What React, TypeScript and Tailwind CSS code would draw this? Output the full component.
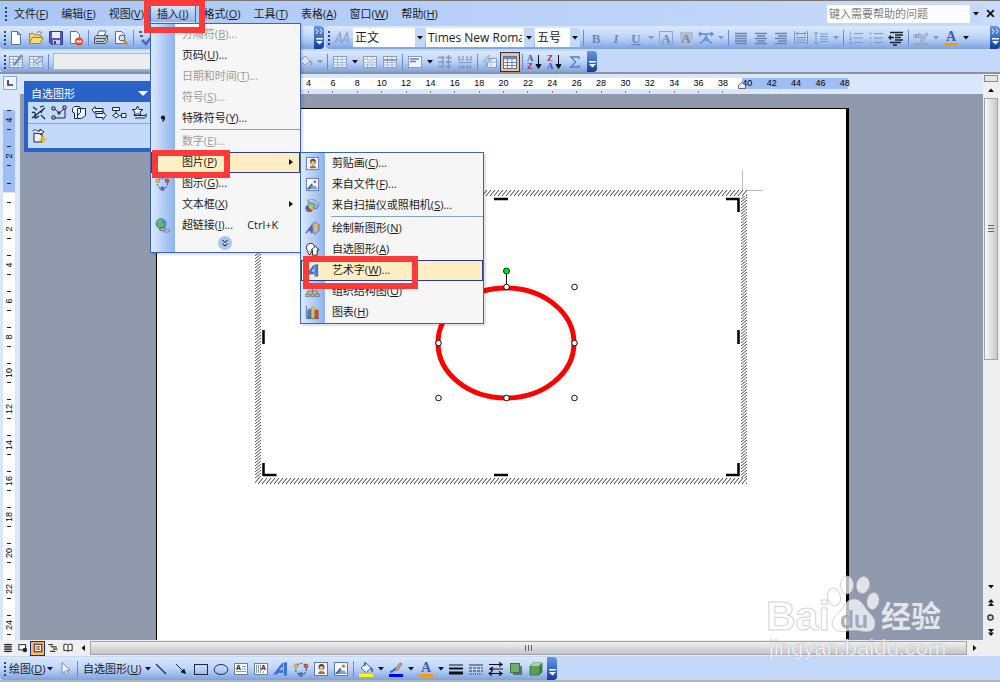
import type { ReactNode } from "react";
import clsx from "clsx";

const FONT = "font-['Open_Sans','Noto_Sans_CJK_SC',sans-serif]";
const BAR = "bg-linear-to-b from-[#dce9fd] via-[#bdd4f8] to-[#7ba3e2]";

const letter = (text: string, color = "#6f86b8", extra = "") => (
  <text x="8" y="13" textAnchor="middle" fontSize="13" fontWeight="bold" fill={color} className={clsx("font-['Liberation_Serif',serif]", extra)}>
    {text}
  </text>
);

const wordArt = (
  <>
    <path d="M0 13.5L9 2l5-1v13.500h-4V12H5.500L4 13.500z" fill="#3f74d6" />
    <path d="M10.500 2v12" stroke="#8db4f2" strokeWidth="1" />
    <path d="M7 9l2.500-3.500V9z" fill="#dce9fd" />
  </>
);

const grid = (
  <>
    <rect x="1.5" y="2.5" width="13" height="11" fill="#eef3fb" stroke="#8b9cbd" />
    <path d="M2 5.5H14M2 8.5H14M2 11H14M5.5 3V13M10 3V13" stroke="#a9b7d0" />
  </>
);

const icons: Record<string, ReactNode> = {
  new: <path d="M3.5 1.5h6l3 3v10h-9zM9.5 1.5v3h3" fill="#fff" stroke="#5d6f96" />,
  open: (
    <>
      <path d="M1.5 13.5v-10h4l1.5 1.5h6v2.5" fill="#f7d272" stroke="#a9812c" />
      <path d="M1.5 13.5l3-6h10.5l-3 6z" fill="#fbdc83" stroke="#a9812c" />
      <path d="M9 3c1-2 4-2 5 1" fill="none" stroke="#4b78c4" />
    </>
  ),
  save: (
    <>
      <path d="M1.5 1.5h13v13h-11l-2-2z" fill="#5557b8" stroke="#353994" />
      <path d="M4 2h8v6H4z" fill="#e8ecf8" />
      <path d="M5 10h7v4.5H5z" fill="#c9cde6" />
      <path d="M6 11h2v3H6z" fill="#353994" />
    </>
  ),
  permission: (
    <>
      <path d="M2.5 1.5h6l3 3v9h-9z" fill="#fff" stroke="#5d6f96" />
      <circle cx="11" cy="11.5" r="4" fill="#df4b2c" />
      <path d="M8.5 11.5h5" stroke="#fff" strokeWidth="2" />
    </>
  ),
  print: (
    <>
      <path d="M4 6l2-5h7l-2 5z" fill="#fff" stroke="#5a6a86" />
      <path d="M1.5 7.5l2-2h11v5l-2 3h-11z" fill="#c2c9d4" stroke="#4c5668" />
      <path d="M2 8.5h10.5l2-3M3 11.5h8" stroke="#4c5668" fill="none" />
      <path d="M11 10h2" stroke="#38a838" strokeWidth="1.5" />
    </>
  ),
  preview: (
    <>
      <path d="M2.5 1.5h6l3 3v9h-9z" fill="#fff" stroke="#5d6f96" />
      <circle cx="9" cy="8" r="3" fill="#cfe3fa" stroke="#4c5668" />
      <path d="M11 10.5l3.5 4" stroke="#c9812b" strokeWidth="2" />
    </>
  ),
  spell: (
    <>
      <path d="M1 2h3M8 2h4M2 6h3" stroke="#334" strokeWidth="1.5" />
      <path d="M4 10l4 4 6-8" stroke="#4a66c4" strokeWidth="2.5" fill="none" />
    </>
  ),
  tablePen: (
    <>
      {grid}
      <path d="M6 11L14 1" stroke="#7c8cad" strokeWidth="2.5" />
    </>
  ),
  tableErase: (
    <>
      {grid}
      <path d="M6 8l4-4 5-2-1 4-5 4z" fill="#c9d2e4" stroke="#8b9cbd" />
    </>
  ),
  bucketGray: (
    <>
      <path d="M3 7l5-5 5 5-5 4z" fill="#dfe6f2" stroke="#8b9cbd" />
      <path d="M13 7c2 1 2 3 1 4" stroke="#8b9cbd" fill="none" strokeWidth="1.5" />
      <path d="M1 13h13v3H1z" fill="#a5adbc" />
    </>
  ),
  grid,
  merge: (
    <>
      {grid}
      <path d="M5 5h7v5H5z" fill="#cfd9ea" />
    </>
  ),
  split: (
    <>
      {grid}
      <path d="M2 6h12" stroke="#8b9cbd" strokeWidth="2" />
    </>
  ),
  alignCell: (
    <>
      <rect x="1.5" y="2.5" width="13" height="11" fill="#eef3fb" stroke="#8b9cbd" />
      <path d="M3 5h9M3 7.5h6" stroke="#6f80a6" strokeWidth="1.5" />
    </>
  ),
  rows: <path d="M1 3.5h5M1 8h5M1 12.5h5M8.5 3.5h6M8.5 8h6M8.5 12.5h6M11.5 1v14M6 2v12" stroke="#8094ba" strokeWidth="1.3" fill="none" />,
  cols: <path d="M2 2v4h4V2M10 2v4h4V2M1 8.5h14M2.5 11v4M6 11v4M10 11v4M13.5 11v4M2 13h12" stroke="#8094ba" strokeWidth="1.2" fill="none" />,
  autoFormat: (
    <>
      <path d="M5.5 4.5h9v9h-9z" fill="#e7edf7" stroke="#8b9cbd" />
      <path d="M5 8h9M9 5v9" stroke="#a9b7d0" />
      <path d="M7 1L1 8h4l-3 5 7-7H6z" fill="#bcc9df" stroke="#8b9cbd" strokeWidth="0.7" />
    </>
  ),
  gridOn: (
    <>
      <rect x="1.5" y="2.5" width="13" height="12" fill="#fff" stroke="#5471ab" />
      <path d="M2 4h12" stroke="#5c88d8" strokeWidth="2.5" />
      <path d="M2 8.5h12M2 11.5h12M5.5 5v9M10 5v9" stroke="#6d86b8" />
    </>
  ),
  sortAZ: (
    <>
      <text x="0" y="7" fontSize="9" fontWeight="bold" fill="#3557a8" className="font-['Liberation_Serif',serif]">A</text>
      <text x="0" y="15" fontSize="9" fontWeight="bold" fill="#a33" className="font-['Liberation_Serif',serif]">Z</text>
      <path d="M11.5 1v12M9 10.5l2.5 4 2.5-4z" stroke="#111" fill="#111" />
    </>
  ),
  sortZA: (
    <>
      <text x="0" y="7" fontSize="9" fontWeight="bold" fill="#a33" className="font-['Liberation_Serif',serif]">Z</text>
      <text x="0" y="15" fontSize="9" fontWeight="bold" fill="#3557a8" className="font-['Liberation_Serif',serif]">A</text>
      <path d="M11.5 1v12M9 10.5l2.5 4 2.5-4z" stroke="#111" fill="#111" />
    </>
  ),
  sum: <path d="M12 5V3H4l4.5 5L4 13h8v-2" fill="none" stroke="#5f7db8" strokeWidth="1.4" />,
  styles: (
    <path d="M1 13L6 3l1.5 10M2.5 10H7M8 13l5-10 1.5 10M9.5 10H14" fill="none" stroke="#93a6cb" strokeWidth="1.5" />
  ),
  bold: letter("B"),
  italic: letter("I", "#6f86b8", "italic"),
  underline: letter("U", "#6f86b8", "underline"),
  charBox: (
    <>
      <rect x="1.5" y="1.5" width="13" height="13" fill="none" stroke="#8ba3d0" />
      {letter("A", "#6f87b8")}
    </>
  ),
  charShade: (
    <>
      <rect x="2" y="2" width="13" height="13" fill="#b3bccf" />
      {letter("A", "#6f87b8")}
    </>
  ),
  charScale: <path d="M1 4h14M3 2L1 4l2 2M13 2l2 2-2 2M2 13c4-1 5-4 6-7 1 3 2 6 6 7M5 10h6" stroke="#5f8bd6" strokeWidth="1.4" fill="none" />,
  justify: <path d="M2 3.5h12M2 6h12M2 8.5h12M2 11h12M2 13.5h12" stroke="#6f84b0" strokeWidth="1.4" />,
  center: <path d="M2 3.5h12M4 6h8M2 8.5h12M4 11h8M2 13.5h12" stroke="#6f84b0" strokeWidth="1.4" />,
  right: <path d="M2 3.5h12M5 6h9M2 8.5h12M5 11h9M2 13.5h12" stroke="#6f84b0" strokeWidth="1.4" />,
  distribute: <path d="M1.5 1v14M14.5 1v14M3 3.5h10M5 2L3 3.5 5 5M11 2l2 1.5L11 5M3 7.5h10M3 10h10M3 12.5h10" stroke="#7e92bb" fill="none" />,
  spacing: <path d="M3 2v12M1 4l2-2 2 2M1 12l2 2 2-2M7 4h8M7 6.5h8M7 9h8M7 11.5h8" stroke="#8094c0" fill="none" />,
  numList: (
    <>
      <path d="M6 3.5h9M6 8h9M6 12.5h9" stroke="#8094c0" />
      <path d="M2.5 1.5v4M1.5 7h2v1l-2 1.5h2M1.5 11.5h2v3h-2M3.5 13h-2" stroke="#8094c0" fill="none" strokeWidth="0.8" />
    </>
  ),
  bulList: (
    <>
      <path d="M6 3.5h9M6 8h9M6 12.5h9" stroke="#8094c0" />
      <path d="M1.5 2.5h2v2h-2zM1.5 7h2v2h-2zM1.5 11.5h2v2h-2z" fill="#98a9cf" />
    </>
  ),
  outdent: <path d="M2 2.5h13M7 5h8M7 7.5h6M7 10h8M2 12.5h11M5 15h4M1 7.5h5M3 5.5L1 7.5l2 2" stroke="#1c2433" strokeWidth="1.3" fill="none" />,
  highlight: (
    <>
      <text x="0" y="8" fontSize="8" fill="#66789c">ab</text>
      <path d="M7 11L13 3l2 1-6 8z" fill="#b6c3dc" stroke="#8798ba" strokeWidth="0.8" />
      <path d="M1 13h14v3H1z" fill="#a2a6a8" />
    </>
  ),
  fontColor: (
    <>
      <text x="8" y="11" textAnchor="middle" fontSize="14" fontWeight="bold" fill="#3a5fae" className="font-['Liberation_Serif',serif]">A</text>
      <path d="M1 13h14v3H1z" fill="#ff9900" />
    </>
  ),
  cursor: <path d="M5 1.5v11l2.5-2.5 2 4.5 2-1-2-4.3h3.5z" fill="#f4f7fc" stroke="#7d8aa6" />,
  line: <path d="M3 3l10 10" stroke="#222b3a" strokeWidth="1.2" />,
  arrow: <path d="M3 3l7 7M12.5 12.5L8 11l3-3z" stroke="#222b3a" fill="#111" />,
  rect: <rect x="1.5" y="3.5" width="13" height="10" fill="none" stroke="#222b3a" />,
  ellipse: <ellipse cx="8" cy="8.5" rx="6.8" ry="5" fill="none" stroke="#222b3a" />,
  textBox: (
    <>
      <rect x="1.5" y="2.5" width="13" height="11" fill="#fff" stroke="#6d7f9f" />
      <text x="3" y="9" fontSize="7" fontWeight="bold" fill="#222">A</text>
      <path d="M9 5.5h4M9 8h4M3 10.5h10" stroke="#8897b3" />
    </>
  ),
  vTextBox: (
    <>
      <rect x="1.5" y="2.5" width="13" height="11" fill="#fff" stroke="#6d7f9f" />
      <text x="8" y="9" fontSize="7" fontWeight="bold" fill="#222">A</text>
      <path d="M3.5 4v8M5.5 4v8M7.5 4v8M10.5 10v2" stroke="#8897b3" />
    </>
  ),
  wordArt,
  diagram: (
    <>
      <circle cx="8" cy="8" r="5.5" fill="none" stroke="#52648c" strokeWidth="1.3" strokeDasharray="2 1.5" />
      <circle cx="3" cy="5" r="2" fill="#f0c23d" stroke="#7a6a3a" strokeWidth="0.5" />
      <circle cx="13" cy="5" r="2" fill="#d9573b" stroke="#7a3a2a" strokeWidth="0.5" />
      <circle cx="8" cy="13.5" r="2" fill="#5a6fd0" stroke="#334488" strokeWidth="0.5" />
    </>
  ),
  clipArt: (
    <>
      <rect x="1.5" y="1.5" width="13" height="13" fill="#f2f6fc" stroke="#5d79aa" />
      <circle cx="8.5" cy="6" r="3" fill="#5b4032" />
      <circle cx="8.5" cy="7" r="2" fill="#eec08c" />
      <path d="M5 13c0-4 7-4 7 0z" fill="#b46a35" />
    </>
  ),
  picture: (
    <>
      <rect x="1.5" y="1.5" width="13" height="13" fill="#f6f9fe" stroke="#5d79aa" />
      <path d="M2 13l5-6 3 3 1-1 3 4z" fill="#7f9fd0" />
      <path d="M2 13l5-6 1 1-3 5z" fill="#46659c" />
      <circle cx="10.5" cy="5" r="1.6" fill="#e0663a" />
    </>
  ),
  scanner: (
    <>
      <path d="M3 2h7l5 4-2 5-5 1 2-5-6-1z" fill="#8fb0cf" stroke="#50708f" strokeWidth="0.8" />
      <path d="M4 2l7 2 3 2" stroke="#dcebf7" fill="none" />
      <circle cx="4.5" cy="11" r="4" fill="#42b04a" />
      <path d="M4.5 11V7a4 4 0 0 1 3.5 6z" fill="#e6c52e" />
      <path d="M4.5 11l3.5 2a4 4 0 0 1-6 1z" fill="#d83d4c" />
      <path d="M4.5 11l-2.5 3a4 4 0 0 1 0-6z" fill="#4f5fd0" />
    </>
  ),
  newDrawing: (
    <>
      <path d="M7 4l4-3 4 3v6l-4 4-3-2z" fill="#9aa9c9" stroke="#5d6c93" strokeWidth="0.8" />
      <path d="M10 4l3-2v8l-3 2z" fill="#e5c15a" />
      <path d="M0 13L6 5l2-.5V13H6v-2H3l-1 2z" fill="#5d5cc4" />
    </>
  ),
  autoShape: (
    <>
      <circle cx="6" cy="6" r="4.5" fill="#fff" stroke="#222" />
      <path d="M11 4.5l4 4h-2V14H8V8.5H6.5z" fill="#fff" stroke="#222" />
      <path d="M2 10l3 4 2-4" stroke="#222" fill="#fff" />
    </>
  ),
  orgChart: <path d="M6.5 2h3v3h-3zM1 10.5h3.5v3H1zM6.3 10.5h3.5v3H6.3zM11.5 10.5H15v3h-3.5zM8 5v5M3 10V7.5h10V10" fill="#d8c078" stroke="#5e6f91" strokeWidth="0.9" />,
  chart: (
    <>
      <path d="M1.5 1v13.5H15" stroke="#5e6f91" fill="none" />
      <path d="M3 6l1.5-2L6 5v9H3z" fill="#4a7bd8" stroke="#2c4f96" strokeWidth="0.6" />
      <path d="M7 3l1.5-1.5L10 3v11H7z" fill="#f0c23d" stroke="#a07a1c" strokeWidth="0.6" />
      <path d="M11 6l1.5-1.5L14 6v8h-3z" fill="#e04a2a" stroke="#8d2c17" strokeWidth="0.6" />
    </>
  ),
  comma: (
    <>
      <circle cx="8.5" cy="7" r="2.2" fill="#111" />
      <path d="M10.2 7.5c0 2-1 3-2.3 3.8" stroke="#111" strokeWidth="1.2" fill="none" />
    </>
  ),
  hyperlink: (
    <>
      <circle cx="6.5" cy="6" r="5.5" fill="#4a8fd8" stroke="#50708f" strokeWidth="0.6" />
      <path d="M2 4c2-3 5-3 6-2l-1 3 3 2-2 3-4 1-1-4z" fill="#5cbf58" />
      <rect x="5" y="10" width="6" height="3.5" rx="1.7" fill="none" stroke="#6b7786" strokeWidth="1.4" />
      <rect x="9.5" y="11.5" width="6" height="3.5" rx="1.7" fill="none" stroke="#8a95a3" strokeWidth="1.4" />
    </>
  ),
  fill: (
    <>
      <path d="M3 7l5-5 5 5-5 4.5z" fill="#e9eff8" stroke="#4c68a0" />
      <path d="M7 5V1M12.5 7c2 1 2 3 1.5 4" stroke="#3c62b0" fill="none" strokeWidth="1.5" />
      <path d="M1 13h14v3H1z" fill="#ffff00" />
    </>
  ),
  lineColor: (
    <>
      <path d="M2 11c3 0 4-2 6-4" stroke="#3c62b0" strokeWidth="2" fill="none" />
      <path d="M7 8l5-6 2 1-5 7z" fill="#e6a64a" stroke="#4c68a0" strokeWidth="0.8" />
      <path d="M1 13h14v3H1z" fill="#0000ff" />
    </>
  ),
  lineWeight: (
    <>
      <path d="M1 4h14" stroke="#111" />
      <path d="M1 7.5h14" stroke="#111" strokeWidth="2" />
      <path d="M1 12h14" stroke="#111" strokeWidth="3" />
    </>
  ),
  dash: (
    <>
      <path d="M1 4h14" stroke="#333" />
      <path d="M1 7h14M1 10h14" stroke="#333" strokeDasharray="3 1" />
      <path d="M1 13h14" stroke="#333" strokeDasharray="1 1" />
    </>
  ),
  arrows: <path d="M1 3.5h13M11 1.5l3 2-3 2M2 8h13M5 6L2 8l3 2M1 12.5h13M4 10.5l-3 2 3 2M11 10.5l3 2-3 2" stroke="#111" fill="none" strokeWidth="1.2" />,
  shadow: (
    <>
      <rect x="5" y="5" width="9" height="9" fill="#5d7368" />
      <rect x="2.5" y="2.5" width="9" height="9" fill="#6fae6c" stroke="#3c7a3d" />
    </>
  ),
  cube: (
    <>
      <path d="M2 5l3-3h9v9l-3 3H2z" fill="#5b9e58" stroke="#2f6a33" strokeWidth="0.8" />
      <path d="M2 5l3-3h9l-3 3z" fill="#a7d4a2" />
      <path d="M11 5l3-3v9l-3 3z" fill="#3c7f40" />
    </>
  ),
  shLines: <path d="M1 13l13-10M2 2l4 3M9 2l4-1M12 4l-2 4M1 8c2-2 4 0 3 2s2 3 4 1M10 10l4 4M3 13h3" stroke="#1d2740" strokeWidth="1.2" fill="none" />,
  shConn: <path d="M1 2h3v3H1zM12 1h3v3h-3zM7 7h2v2H7zM1 11h3v3H1zM4 4l4 4 5-4M14 4v9H4" stroke="#1d2740" fill="none" />,
  shBasic: <path d="M1.5 3.5l2-2h5l1 2v4l-3 3v3h-3V8l-2-1zM6.5 6.5V3.5H14.5v7l-4 3h-4z" stroke="#1d2740" fill="#eef4fd" />,
  shArrow: <path d="M1 5l3-3.5V3.5h8v3H4V8.5zM15 10.5l-3-4v2H5v4h7v2z" stroke="#1d2740" fill="#eef4fd" />,
  shFlow: <path d="M1.5 2.5h7v3h-7zM5 5.5v3M1.5 10.5L5 8l3 2.5L5 13zM8.5 10.5h2M10.5 8.5h4.5v4h-4.5z" stroke="#1d2740" fill="#eef4fd" />,
  shStar: <path d="M6.5 1l1.5 3.5h4L9 7l1 3.5L6.5 8.5 3 10.5 4 7 1 4.5h4zM3 10.5h12M4 13h10M15 8.5v4" stroke="#1d2740" fill="#eef4fd" />,
  shMore: (
    <>
      <path d="M2 3.5C2 1.5 5 1 6 3h3V1l4 3-4 3M3 5v9h8V6z" stroke="#1d2740" fill="#eef4fd" />
      <path d="M12 8v7M8.5 11.5h7" stroke="#e8b52b" strokeWidth="2.2" />
    </>
  ),
  vNormal: <path d="M3 3.5h10M3 6.5h10M3 9.5h10M3 12.5h10" stroke="#111" strokeWidth="1.5" />,
  vWeb: (
    <>
      <rect x="2.5" y="3.5" width="9" height="7" fill="#fff" stroke="#222" strokeWidth="1.3" />
      <circle cx="10.5" cy="10.5" r="3" fill="#222" />
    </>
  ),
  vPrint: (
    <>
      <rect x="3" y="3" width="10" height="10" fill="#fbe6c4" stroke="#3b3a55" strokeWidth="1.5" />
      <path d="M5.5 6.5h5M5.5 9.5h5" stroke="#3b3a55" strokeWidth="1.3" />
    </>
  ),
  vOutline: <path d="M2 3.5h6M5 6.5h8M8 9.5h6M4 12.5h7" stroke="#333" strokeWidth="1.5" />,
  vRead: <path d="M2.5 3.5c2-1 4-1 5.5 1 1.5-2 3.5-2 5.5-1v8c-2-1-4-.5-5.5 1-1.5-1.5-3.5-2-5.5-1zM8 4.5v8" fill="#fff" stroke="#222" strokeWidth="1.3" />,
};

function Icon({ name, className = "size-4" }: { name: string; className?: string }) {
  return (
    <svg viewBox="0 0 16 16" className={clsx("shrink-0", className)} aria-hidden="true">
      {icons[name]}
    </svg>
  );
}

function Caret({ dim, className }: { dim?: boolean; className?: string }) {
  return (
    <svg viewBox="0 0 6 4" className={clsx("h-1 w-1.5 shrink-0", className)} aria-hidden="true">
      <path d="M0 0h6L3 3.5z" fill={dim ? "#8b97ad" : "#111"} />
    </svg>
  );
}

// "文件(&F)" marks F as the access key
function Accel({ text }: { text: string }) {
  const [before, rest] = text.split("&");
  if (!rest) return <>{before}</>;
  return (
    <>
      {before}
      <u>{rest[0]}</u>
      {rest.slice(1)}
    </>
  );
}

const Grip = () => (
  <span className="flex w-0.5 shrink-0 flex-col gap-0.5">
    {[0, 1, 2, 3].map((i) => (
      <i key={i} className="h-0.5 w-0.5 bg-[#27418a]" />
    ))}
  </span>
);

const Sep = () => (
  <span className="flex w-[5px] shrink-0 justify-center">
    <i className="h-4 w-px bg-[#6a8ccb]" />
  </span>
);

// "|" is a separator, "v" a drop-down arrow, "-" a disabled drop-down arrow
function Tools({ items, active }: { items: string[]; active?: string }) {
  return (
    <>
      {items.map((name, i) => {
        if (name === "|") return <Sep key={i} />;
        if (name === "v" || name === "-")
          return (
            <button key={i} aria-label="更多" className="flex h-full w-2.5 shrink-0 items-center justify-center">
              <Caret dim={name === "-"} />
            </button>
          );
        return (
          <button
            key={i}
            aria-label={name}
            className={clsx(
              "flex h-5 w-5 shrink-0 items-center justify-center",
              name === active && "border border-[#1c2a80] bg-[#fdbf6b]"
            )}
          >
            <Icon name={name} />
          </button>
        );
      })}
    </>
  );
}

function EndCap({ more }: { more?: boolean }) {
  return (
    <button
      aria-label="工具栏选项"
      className="ml-auto flex h-full w-2.5 shrink-0 flex-col items-center justify-end gap-1 rounded-r bg-linear-to-b from-[#6b97e0] to-[#0b3ea0] pb-1"
    >
      {more && (
        <svg viewBox="0 0 8 5" className="h-[5px] w-2" aria-hidden="true">
          <path d="M1 0l2 2.5L1 5M5 0l2 2.5L5 5" stroke="#fff" fill="none" />
        </svg>
      )}
      <svg viewBox="0 0 7 7" className="size-[7px]" aria-hidden="true">
        <path d="M0 0h7v1.5H0zM0 3h7L3.5 6.5z" fill="#fff" />
      </svg>
    </button>
  );
}

function Combo({ label, value, className }: { label: string; value: string; className: string }) {
  return (
    <label className={clsx("relative mr-px flex h-[19px] shrink-0 overflow-hidden bg-white", className)}>
      <select
        aria-label={label}
        className="w-full appearance-none overflow-hidden bg-transparent pr-3 pl-0.5 text-[12px] leading-4 text-clip outline-none"
      >
        <option>{value}</option>
      </select>
      <span className="pointer-events-none absolute inset-y-0 right-0 flex w-2.5 items-center justify-center bg-[#c3d8f8]">
        <Caret />
      </span>
    </label>
  );
}

interface Item {
  text: string;
  icon?: string;
  disabled?: boolean;
  sub?: boolean;
  hot?: boolean;
  shortcut?: string;
  sepBefore?: boolean;
}

const insertItems: Item[] = [
  { text: "分隔符(&B)...", disabled: true },
  { text: "页码(&U)..." },
  { text: "日期和时间(&T)...", disabled: true },
  { text: "符号(&S)...", disabled: true },
  { text: "特殊符号(&Y)...", icon: "comma" },
  { text: "数字(&E)...", disabled: true, sepBefore: true },
  { text: "图片(&P)", sub: true, hot: true },
  { text: "图示(&G)...", icon: "diagram" },
  { text: "文本框(&X)", sub: true },
  { text: "超链接(&I)...", icon: "hyperlink", shortcut: "Ctrl+K" },
];

const pictureItems: Item[] = [
  { text: "剪贴画(&C)...", icon: "clipArt" },
  { text: "来自文件(&F)...", icon: "picture" },
  { text: "来自扫描仪或照相机(&S)...", icon: "scanner" },
  { text: "绘制新图形(&N)", icon: "newDrawing", sepBefore: true },
  { text: "自选图形(&A)", icon: "autoShape" },
  { text: "艺术字(&W)...", icon: "wordArt", hot: true },
  { text: "组织结构图(&O)", icon: "orgChart" },
  { text: "图表(&H)", icon: "chart" },
];

function MenuRows({ items, children }: { items: Item[]; children?: ReactNode }) {
  return (
    <>
      {items.map((item) => (
        <div key={item.text} className="relative">
          {item.sepBefore && <div className="ml-[30px] h-0.5 border-t border-[#7fa3dc]" />}
          <button
            disabled={item.disabled}
            className={clsx(
              "flex h-[21px] w-full items-center border text-left",
              item.hot ? "border-[#2b3a9c] bg-[#ffeec2]" : "border-transparent",
              item.disabled ? "text-[#9b9b9b]" : "text-[#1b1b1b]"
            )}
          >
            <span className="flex w-[30px] shrink-0 pl-[3px]">{item.icon && <Icon name={item.icon} className="size-[15px]" />}</span>
            <span className="whitespace-nowrap">
              <Accel text={item.text} />
            </span>
            {item.shortcut && <span className="mr-auto ml-3.5">{item.shortcut}</span>}
            {item.sub && (
              <svg viewBox="0 0 4 6" className="mr-1.5 ml-auto h-1.5 w-1" aria-hidden="true">
                <path d="M0 0v6l4-3z" fill="#111" />
              </svg>
            )}
          </button>
          {item.sub && item.hot && children}
        </div>
      ))}
    </>
  );
}

const MENU_BOX =
  "absolute z-20 border border-[#3d63b4] bg-[#f6f6f6] bg-[linear-gradient(to_right,#dceafe,#8db2ec)] bg-[length:24px_100%] bg-no-repeat shadow-[2px_2px_2px_#0002]";

function InsertMenu() {
  return (
    <div className={clsx(MENU_BOX, "top-full left-0 w-[151px]")}>
      <MenuRows items={insertItems}>
        <div className={clsx(MENU_BOX, "top-0 left-full w-[184px]")}>
          <MenuRows items={pictureItems} />
        </div>
      </MenuRows>
      <div className="flex h-4 justify-center">
        <button aria-label="展开" className="flex size-[14px] items-center justify-center rounded-full bg-[#a9c6f2]">
          <svg viewBox="0 0 6 8" className="h-2 w-1.5" aria-hidden="true">
            <path d="M.5 1L3 3.5 5.5 1M.5 4.5L3 7l2.5-2.5" stroke="#111" fill="none" />
          </svg>
        </button>
      </div>
    </div>
  );
}

const menus = ["文件(&F)", "编辑(&E)", "视图(&V)", "插入(&I)", "格式(&O)", "工具(&T)", "表格(&A)", "窗口(&W)", "帮助(&H)"];

function MenuBar() {
  return (
    <nav className="flex h-[26px] items-center border-t border-[#7d7470] bg-linear-to-r from-[#a9c7f7] to-[#c8dbfa] pl-[5px]">
      <Grip />
      {menus.map((m) => {
        const open = m.startsWith("插入");
        return (
          <div key={m} className="relative">
            <button
              className={clsx(
                "h-[18px] border pl-1.5 leading-4 whitespace-nowrap",
                open
                  ? "border-[#3d63b4] border-b-transparent bg-linear-to-b from-[#d6e5fc] to-[#8fb3ec] pr-[7px]"
                  : "border-transparent pr-[5px]"
              )}
            >
              <Accel text={m} />
            </button>
            {open && <InsertMenu />}
          </div>
        );
      })}
      <div className="mr-1 ml-auto flex h-[18px] w-[155px] bg-white">
        <input aria-label="帮助" placeholder="键入需要帮助的问题" className="w-full pl-0.5 outline-none placeholder:text-[#7d7d7d]" />
        <span className="flex w-3 shrink-0 items-center justify-center bg-[#c3d8f8]">
          <Caret />
        </span>
      </div>
      <button aria-label="关闭" className="mr-[5px] size-[9px]">
        <svg viewBox="0 0 8 8" aria-hidden="true">
          <path d="M1 1l6 6M7 1L1 7" stroke="#111" strokeWidth="1.6" />
        </svg>
      </button>
    </nav>
  );
}

function Toolbars() {
  return (
    <div className="flex flex-col gap-0.5 border-b-2 border-[#8e9199] bg-[#c4d8f9]">
      <div className="flex h-[23px] gap-0.5">
        <div className={clsx("flex w-[324px] shrink-0 items-center rounded pl-1", BAR)}>
          <Grip />
          <Tools items={["new", "open", "save", "permission", "|", "print", "preview", "|", "spell"]} />
          <EndCap more />
        </div>
        <div className={clsx("flex min-w-0 flex-1 items-center rounded-l pl-0.5", BAR)}>
          <Grip />
          <span className="w-0.5" />
          <Tools items={["styles"]} />
          <span className="w-px" />
          <Combo label="样式" value="正文" className="w-[72px]" />
          <Combo label="字体" value="Times New Roman" className="w-[108px]" />
          <Combo label="字号" value="五号" className="w-[45px]" />
          <Tools
            items={["|", "bold", "italic", "underline", "-", "charBox", "charShade", "charScale", "-", "|", "justify", "center", "right", "distribute", "spacing", "-", "|", "numList", "bulList", "outdent", "|", "highlight", "-", "fontColor", "v"]}
          />
          <EndCap more />
        </div>
      </div>
      <div className={clsx("flex h-[21px] w-[597px] items-center rounded pl-1", BAR)}>
        <Grip />
        <Tools items={["tablePen", "tableErase", "|"]} />
        <select aria-label="线型" className="mr-1.5 ml-0.5 h-[17px] w-[236px] appearance-none border border-[#a9b6c9] bg-[#ecedee]">
          <option></option>
        </select>
        <Tools
          items={["bucketGray", "-", "|", "grid", "v", "merge", "split", "|", "alignCell", "v", "rows", "cols", "|", "autoFormat", "gridOn", "|", "sortAZ", "sortZA", "sum"]}
          active="gridOn"
        />
        <EndCap />
      </div>
    </div>
  );
}

const NUM = "font-['Liberation_Sans',sans-serif] text-[9px] leading-none text-black";

function HorizontalRuler() {
  const marks = Array.from({ length: 24 }, (_, i) => (i + 1) * 2);
  return (
    <div className="h-5 shrink-0 bg-[#d8e7fc] pt-1 pl-0.5">
      <div className="mx-auto flex w-[693px]">
        <div className="relative ml-[104px] h-[11px] w-[588px] bg-[linear-gradient(to_right,#fff_482px,#9ebef5_482px)]">
          <div className="ml-3 flex w-[585px]">
            {marks.map((n) => (
              <span key={n} className={clsx("flex flex-1 flex-col items-center gap-[3px] pt-px", NUM)}>
                {n}
                <i className={clsx("h-0.5 w-px", n < 40 && "bg-[#7c8798]")} />
              </span>
            ))}
          </div>
          <svg viewBox="0 0 8 7" className="absolute top-1 left-[478px] h-[7px] w-2" aria-hidden="true">
            <path d="M.5 6.5v-3L4 .5l3.5 3v3z" fill="#eee" stroke="#666" />
          </svg>
        </div>
      </div>
    </div>
  );
}

function RulerCell({ n }: { n: number }) {
  return (
    <div className="flex h-9 shrink-0 flex-col items-center justify-center gap-px">
      <i className="h-px w-1 bg-[#222]" />
      <span className={clsx("flex size-4 -rotate-90 items-center justify-center", NUM)}>{n}</span>
      <i className="h-px w-1 bg-[#222]" />
    </div>
  );
}

const HalfCell = () => (
  <div className="flex h-[18px] shrink-0 items-center justify-center">
    <i className="h-px w-1 bg-[#222]" />
  </div>
);

function VerticalRuler() {
  return (
    <div className="flex w-5 shrink-0 flex-col bg-[#d8e7fc] pl-[3px]">
      <button aria-label="制表符" className="mt-0.5 flex size-[14px] shrink-0 items-center justify-center border border-[#8aa6da] bg-[#eef4fd]">
        <svg viewBox="0 0 6 6" className="size-1.5" aria-hidden="true">
          <path d="M1 0v5h5" stroke="#333" strokeWidth="1.6" fill="none" />
        </svg>
      </button>
      <div className="mt-5 flex h-[82px] w-3 shrink-0 flex-col justify-end overflow-hidden bg-[#9ebef5]">
        <RulerCell n={4} />
        <RulerCell n={2} />
        <HalfCell />
      </div>
      <div className="mt-px flex min-h-0 w-3 flex-1 flex-col overflow-hidden bg-white">
        <HalfCell />
        {Array.from({ length: 12 }, (_, i) => (
          <RulerCell key={i} n={(i + 1) * 2} />
        ))}
      </div>
    </div>
  );
}

function Drawing() {
  const handles = [
    [251, 117], [319, 117], [183, 173], [319, 173], [183, 228], [251, 228], [319, 228],
  ];
  return (
    <svg viewBox="0 0 510 316" className="h-[316px] w-[510px]" aria-label="绘图画布">
      <defs>
        <pattern id="hatchH" width="4" height="6" patternUnits="userSpaceOnUse">
          <path d="M-1 6L4 0M3 6L8 0M-5 6L0 0" stroke="#222" strokeWidth="0.9" />
        </pattern>
        <pattern id="hatchV" width="6" height="3" patternUnits="userSpaceOnUse">
          <path d="M0 3L6 -2M0 6L6 1M0 9L6 4" stroke="#222" strokeWidth="0.8" />
        </pattern>
      </defs>
      <path d="M487.5 0v20M492 20.5h16" stroke="#b9b9b9" />
      <g transform="translate(0 20)">
        <rect width="492" height="6" fill="url(#hatchH)" />
        <rect y="6" width="6" height="282" fill="url(#hatchV)" />
        <rect x="486" y="6" width="6" height="282" fill="url(#hatchV)" />
        <g transform="translate(0 288)">
          <rect width="492" height="6" fill="url(#hatchH)" />
        </g>
      </g>
      <path
        d="M239 29h14M471 29h12.5v13M8.5 160v14M483.5 160v14M8.5 293v12h13M471 305h12.5V293M239 305h14"
        stroke="#000"
        strokeWidth="2.5"
        fill="none"
      />
      <ellipse cx="251" cy="173" rx="68" ry="55" fill="none" stroke="#f00" strokeWidth="5" />
      <path d="M251.5 102v13" stroke="#111" />
      <circle cx="251.5" cy="101" r="3" fill="#00e600" stroke="#123" />
      {handles.map(([x, y]) => (
        <circle key={`${x}-${y}`} cx={x + 0.5} cy={y} r="2.8" fill="#fff" stroke="#111" />
      ))}
    </svg>
  );
}

function ShapesPalette() {
  return (
    <section className="absolute top-[7px] left-1 w-[132px] border-4 border-[#2a63c8] bg-[#c4dafa]">
      <header className="flex h-[17px] items-center justify-between bg-[#2a63c8] pr-1 pl-[3px] text-white">
        自选图形
        <svg viewBox="0 0 10 5" className="h-[5px] w-2.5" aria-hidden="true">
          <path d="M0 0h10L5 5z" fill="#fff" />
        </svg>
      </header>
      <div className="flex h-[22px] items-center border-b border-[#84a8e0] pl-px">
        <Tools items={["shLines", "shConn", "shBasic", "shArrow", "shFlow", "shStar"]} />
      </div>
      <div className="flex h-[24px] items-center pl-px">
        <Tools items={["shMore"]} />
      </div>
    </section>
  );
}

function VerticalScroll() {
  return (
    <div className="flex w-[17px] shrink-0 flex-col items-center bg-[#efefef] pr-0.5 pt-px">
      <div className="h-[7px] w-[14px] shrink-0 border border-[#8a8a8a] bg-[#e6e6e6]" />
      <button aria-label="向上" className="flex h-4 shrink-0 items-center">
        <Caret className="rotate-180" />
      </button>
      <div className="flex h-[262px] w-[14px] shrink-0 flex-col items-center justify-center gap-px border border-[#a3a3a3] bg-linear-to-r from-[#f8f8f8] to-[#c9c9cd]">
        {[0, 1, 2].map((i) => (
          <i key={i} className="h-0.5 w-1.5 border-t border-[#666]" />
        ))}
      </div>
      <button aria-label="向下" className="mt-auto flex h-4 items-center">
        <Caret />
      </button>
      <div className="flex flex-col items-center gap-2 pt-1 pb-1">
        <svg viewBox="0 0 6 7" className="h-[7px] w-1.5" aria-hidden="true">
          <path d="M0 3.5L3 0l3 3.5zM0 7l3-3.5L6 7z" fill="#111" />
        </svg>
        <svg viewBox="0 0 7 7" className="size-[7px]" aria-hidden="true">
          <circle cx="3.5" cy="3.5" r="2.7" fill="#ccc" stroke="#222" strokeWidth="1.2" />
        </svg>
        <svg viewBox="0 0 6 7" className="h-[7px] w-1.5" aria-hidden="true">
          <path d="M0 0h6L3 3.5zM0 3.5h6L3 7z" fill="#111" />
        </svg>
      </div>
    </div>
  );
}

function ViewBar() {
  return (
    <div className="flex h-4 shrink-0 items-center bg-[#efefef] pr-[17px]">
      {["vNormal", "vWeb", "vPrint", "vOutline", "vRead"].map((v) => (
        <button
          key={v}
          aria-label={v}
          className={clsx("flex h-[15px] w-[15px] items-center justify-center", v === "vPrint" && "border border-[#1c2a80] bg-[#fdb862]")}
        >
          <Icon name={v} className="size-3" />
        </button>
      ))}
      <button aria-label="向左" className="flex w-[15px] justify-center">
        <Caret className="rotate-90" />
      </button>
      <div className="flex h-3.5 flex-1 items-center justify-center gap-px border border-[#a3a3a3] bg-linear-to-b from-[#f1f1f1] to-[#c5c5c9]">
        {[0, 1, 2].map((i) => (
          <i key={i} className="h-1.5 w-0.5 border-l border-[#666]" />
        ))}
      </div>
      <button aria-label="向右" className="flex w-4 justify-center">
        <Caret className="-rotate-90" />
      </button>
    </div>
  );
}

function DrawingBar() {
  return (
    <div className="shrink-0 border-b-2 border-[#b4b4b4] bg-[#c4d8f9] pt-px">
      <div className={clsx("flex h-[23px] w-[557px] items-center rounded pl-1", BAR)}>
        <Grip />
        <button className="flex w-[49px] items-center justify-between pr-0.5 pl-[3px] whitespace-nowrap">
          <span>
            <Accel text="绘图(&D)" />
          </span>
          <Caret />
        </button>
        <Tools items={["cursor", "|"]} />
        <button className="flex w-[71px] items-center justify-between pl-[3px] whitespace-nowrap">
          <span>
            <Accel text="自选图形(&U)" />
          </span>
          <Caret />
        </button>
        <Tools
          items={["line", "arrow", "rect", "ellipse", "textBox", "vTextBox", "wordArt", "diagram", "clipArt", "picture", "|", "fill", "v", "lineColor", "v", "fontColor", "v", "lineWeight", "dash", "arrows", "shadow", "cube"]}
        />
        <EndCap />
      </div>
    </div>
  );
}

function Watermark() {
  return (
    <svg
      viewBox="0 0 184 90"
      className="pointer-events-none absolute right-[52px] bottom-[18px] h-[90px] w-[184px] font-['Liberation_Sans','Noto_Sans_CJK_SC',sans-serif]"
      aria-hidden="true"
    >
      <g fill="#fff" fillOpacity="0.72" stroke="#b5b5bb" strokeOpacity="0.6" strokeWidth="1">
        <text x="2" y="56" fontSize="41" fontWeight="bold">Bai</text>
        <ellipse cx="70" cy="23" rx="6.5" ry="9" transform="rotate(-12 70 23)" />
        <ellipse cx="83" cy="11" rx="6.5" ry="9" />
        <ellipse cx="99" cy="11" rx="6.5" ry="8.5" transform="rotate(12 99 11)" />
        <ellipse cx="109" cy="27" rx="6" ry="8.5" transform="rotate(12 109 27)" />
        <path d="M90 25c6 0 9 5 13 11 5 6 9 9 8 15-1 8-9 7-14 6-5-1-9-1-14 0-6 1-14 1-15-7 0-6 5-9 9-14 4-6 7-11 13-11z" />
      </g>
      <text x="76" y="54" fontSize="23" fontWeight="bold" fill="#9199ae" fillOpacity="0.8">du</text>
      <text x="117" y="53" fontSize="30" fontWeight="bold" fill="#fff" fillOpacity="0.75">经验</text>
      <text x="5" y="81" fontSize="22" fill="#fff" fillOpacity="0.9" stroke="#a5a5ad" strokeOpacity="0.5" strokeWidth="0.7">
        jingyan.baidu.com
      </text>
    </svg>
  );
}

export default function App() {
  return (
    <div className={clsx("relative flex h-screen flex-col overflow-hidden bg-[#efefef] text-[11px] leading-4 text-[#1b1b1b]", FONT)}>
      <MenuBar />
      <Toolbars />
      <main className="flex min-h-0 flex-1">
        <VerticalRuler />
        <div className="relative flex min-w-0 flex-1 flex-col bg-[#9199ae]">
          <HorizontalRuler />
          <div className="mt-3.5 flex min-h-0 flex-1 justify-center pl-0.5">
            <div className="w-[693px] overflow-hidden border-t border-r-[3px] border-l border-black bg-white pt-[61px] pl-[98px]">
              <Drawing />
            </div>
          </div>
          <ShapesPalette />
        </div>
        <VerticalScroll />
      </main>
      <ViewBar />
      <DrawingBar />
      <Watermark />
      <div className="pointer-events-none absolute top-0 left-[144px] z-30 h-[33px] w-[61px] border-[6px] border-[#fb3a3a]" />
      <div className="pointer-events-none absolute top-[150px] left-[152px] z-30 h-[28px] w-[78px] border-[6px] border-[#fb3a3a]" />
      <div className="pointer-events-none absolute top-[256px] left-[303px] z-30 h-[33px] w-[115px] border-[6px] border-[#fb3a3a]" />
    </div>
  );
}
